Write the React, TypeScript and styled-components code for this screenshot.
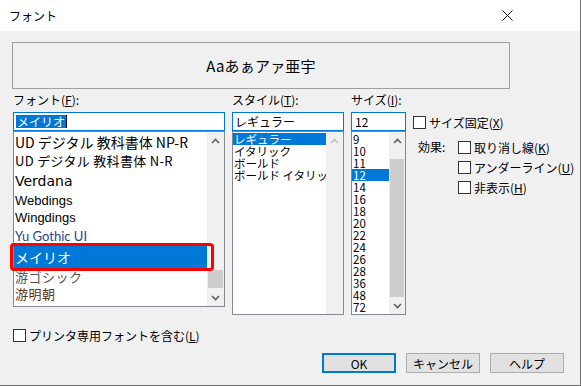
import React from "react";
import styled, { createGlobalStyle } from "styled-components";

const GlobalStyle = createGlobalStyle`
  html, body {
    margin: 0;
    padding: 0;
    background: #f0f0f0;
  }
  body {
    font-family: "Noto Sans CJK JP", "Noto Sans", sans-serif;
    font-size: 12px;
    color: #000;
  }
  * {
    box-sizing: border-box;
  }
`;

const Window = styled.div`
  width: 581px;
  height: 386px;
  background: #f0f0f0;
  border-right: 1px solid #6e6e6e;
  border-bottom: 1px solid #6e6e6e;
  display: flex;
  flex-direction: column;
  overflow: hidden;
`;

const TitleBar = styled.div`
  height: 31px;
  flex: none;
  background: #fff;
  display: flex;
  align-items: center;
  justify-content: space-between;
  padding-left: 9px;
  padding-right: 67px;
  font-size: 12px;
  line-height: 14px;
`;

const Body = styled.div`
  flex: 1;
  padding: 11px 0 0 12px;
  display: flex;
  flex-direction: column;
`;

const Preview = styled.div`
  width: 498px;
  height: 47px;
  border: 1px solid #a0a0a0;
  display: flex;
  align-items: center;
  justify-content: center;
  font-size: 15px;
  letter-spacing: 0.2px;
`;

const Columns = styled.div`
  display: grid;
  grid-template-columns: 212px 112px 55px 1fr;
  column-gap: 7px;
  margin-top: 2px;
  padding-left: 1px;
  align-items: start;
`;

const Column = styled.div`
  display: flex;
  flex-direction: column;
`;

const Label = styled.div`
  height: 18px;
  line-height: 18px;
  margin-bottom: 3px;
  white-space: nowrap;
`;

const Input = styled.div<{ $pad?: number }>`
  height: 19px;
  border: 1px solid #0078d7;
  background: #fff;
  padding-left: ${(p) => p.$pad || 2}px;
  line-height: 17px;
  display: flex;
  align-items: center;
  white-space: nowrap;
`;

const SelText = styled.span`
  background: #0078d7;
  color: #fff;
  line-height: 13px;
  padding: 0 1px;
`;

const Caret = styled.span`
  display: inline-block;
  width: 1px;
  height: 13px;
  background: #000;
`;

const List = styled.div<{ $height: number }>`
  height: ${(p) => p.$height}px;
  border: 1px solid #828790;
  background: #fff;
  display: flex;
`;

const ListBody = styled.div<{ $clip?: boolean }>`
  flex: 1;
  min-width: 0;
  padding-top: 1px;
  overflow: ${(p) => (p.$clip ? "hidden" : "visible")};
`;

const FontItem = styled.div<{
  $h: number;
  $size: number;
  $family?: string;
  $color?: string;
  $selected?: boolean;
  $spacing?: number;
}>`
  position: relative;
  height: ${(p) => p.$h}px;
  line-height: ${(p) => p.$h}px;
  padding-left: 1px;
  font-size: ${(p) => p.$size}px;
  font-family: ${(p) => p.$family || `"Noto Sans CJK JP", sans-serif`};
  letter-spacing: ${(p) => p.$spacing || 0}px;
  color: ${(p) => (p.$selected ? "#fff" : p.$color || "#000")};
  background: ${(p) => (p.$selected ? "#0078d7" : "transparent")};
  white-space: nowrap;
`;

const Annotation = styled.div`
  position: absolute;
  top: -3px;
  bottom: -3px;
  left: -4px;
  right: -7px;
  border: 3px solid #f00;
  border-radius: 4px;
  z-index: 2;
  pointer-events: none;
`;

const Row = styled.div<{ $selected?: boolean }>`
  height: 12px;
  line-height: 12px;
  font-size: 11.5px;
  padding-left: 1px;
  white-space: nowrap;
  color: ${(p) => (p.$selected ? "#fff" : "#000")};
  background: ${(p) => (p.$selected ? "#0078d7" : "transparent")};
`;

const ScrollBar = styled.div<{ $width: number }>`
  width: ${(p) => p.$width}px;
  flex: none;
  background: #f0f0f0;
  display: flex;
  flex-direction: column;
`;

const Arrow = styled.div`
  height: 17px;
  flex: none;
  display: flex;
  align-items: center;
  justify-content: center;
`;

const Track = styled.div`
  flex: 1;
  display: flex;
  flex-direction: column;
`;

const Thumb = styled.div<{ $height?: number }>`
  flex: ${(p) => (p.$height ? "none" : "1")};
  height: ${(p) => (p.$height ? `${p.$height}px` : "auto")};
  background: #cdcdcd;
  margin: 0 1px;
`;

const Gap = styled.div<{ $height?: number }>`
  flex: ${(p) => (p.$height ? "none" : "1")};
  height: ${(p) => (p.$height ? `${p.$height}px` : "auto")};
`;

const Options = styled.div`
  display: flex;
  flex-direction: column;
  padding-top: 22px;
`;

const CheckRow = styled.label<{ $height?: number }>`
  display: flex;
  align-items: center;
  gap: 3px;
  height: ${(p) => p.$height || 20}px;
  white-space: nowrap;
`;

const Box = styled.span`
  width: 13px;
  height: 13px;
  flex: none;
  border: 1px solid #333;
  background: #fff;
`;

const Effects = styled.div`
  display: grid;
  grid-template-columns: 40px auto;
  margin-top: 6px;
  margin-left: 5px;
`;

const EffectsLabel = styled.div`
  height: 20px;
  line-height: 20px;
`;

const EffectsList = styled.div`
  display: flex;
  flex-direction: column;
`;

const Footer = styled.div`
  display: flex;
  flex-direction: column;
  padding-left: 1px;
  margin-top: 11px;
`;

const Buttons = styled.div`
  display: flex;
  justify-content: flex-end;
  gap: 10px;
  margin-top: 9px;
  padding-right: 16px;
`;

const Button = styled.div<{ $primary?: boolean }>`
  width: 74px;
  height: 20px;
  background: #e1e1e1;
  border: ${(p) => (p.$primary ? "2px solid #0078d7" : "1px solid #adadad")};
  display: flex;
  align-items: center;
  justify-content: center;
  font-size: 12px;
`;

const Chevron = ({ up, disabled }: { up?: boolean; disabled?: boolean }) => (
  <svg width="9" height="6" viewBox="0 0 9 6">
    <polyline
      points={up ? "1,5 4.5,1.5 8,5" : "1,1 4.5,4.5 8,1"}
      fill="none"
      stroke={disabled ? "#bfbfbf" : "#606060"}
      strokeWidth="1.6"
    />
  </svg>
);

const CloseIcon = () => (
  <svg width="11" height="11" viewBox="0 0 11 11">
    <path d="M0.5 0.5 L10.5 10.5 M10.5 0.5 L0.5 10.5" stroke="#111" strokeWidth="1" />
  </svg>
);

const fontItems = [
  { name: "UD デジタル 教科書体 NP-R", h: 19, size: 14 },
  { name: "UD デジタル 教科書体 N-R", h: 18, size: 13, spacing: 0.3 },
  { name: "Verdana", h: 22, size: 14, family: `"DejaVu Sans", sans-serif` },
  { name: "Webdings", h: 17, size: 13, family: `"Liberation Sans", sans-serif` },
  { name: "Wingdings", h: 18, size: 13, family: `"Liberation Sans", sans-serif` },
  { name: "Yu Gothic UI", h: 19, size: 13, family: `"Lato", sans-serif`, color: "#1d3f8f" },
  { name: "メイリオ", h: 22, size: 14, selected: true },
  { name: "游ゴシック", h: 17, size: 13, spacing: 0.5, color: "#5a4e48" },
  { name: "游明朝", h: 18, size: 13, spacing: 0.5, color: "#5c3418" },
];

const styles = ["レギュラー", "イタリック", "ボールド", "ボールド イタリック"];
const sizes = ["9", "10", "11", "12", "14", "16", "18", "20", "22", "24", "26", "28", "36", "48", "72"];

export default function App() {
  return (
    <>
      <GlobalStyle />
      <Window>
        <TitleBar>
          <span>フォント</span>
          <CloseIcon />
        </TitleBar>
        <Body>
          <Preview>Aaあぁアァ亜宇</Preview>
          <Columns>
            <Column>
              <Label>
                フォント(<u>F</u>):
              </Label>
              <Input>
                <SelText>メイリオ</SelText>
                <Caret />
              </Input>
              <List $height={176}>
                <ListBody>
                  {fontItems.map((f) => (
                    <FontItem
                      key={f.name}
                      $h={f.h}
                      $size={f.size}
                      $family={f.family}
                      $color={f.color}
                      $spacing={f.spacing}
                      $selected={f.selected}
                    >
                      {f.name}
                      {f.selected && <Annotation />}
                    </FontItem>
                  ))}
                </ListBody>
                <ScrollBar $width={17}>
                  <Arrow>
                    <Chevron up />
                  </Arrow>
                  <Track>
                    <Gap />
                    <Thumb $height={18} />
                    <Gap $height={1} />
                  </Track>
                  <Arrow>
                    <Chevron />
                  </Arrow>
                </ScrollBar>
              </List>
            </Column>

            <Column>
              <Label>
                スタイル(<u>T</u>):
              </Label>
              <Input>レギュラー</Input>
              <List $height={184}>
                <ListBody $clip>
                  {styles.map((s, i) => (
                    <Row key={s} $selected={i === 0}>
                      {s}
                    </Row>
                  ))}
                </ListBody>
                <ScrollBar $width={17}>
                  <Arrow>
                    <Chevron up disabled />
                  </Arrow>
                  <Track />
                </ScrollBar>
              </List>
            </Column>

            <Column>
              <Label>
                サイズ(<u>I</u>):
              </Label>
              <Input $pad={3}>12</Input>
              <List $height={184}>
                <ListBody $clip>
                  {sizes.map((s) => (
                    <Row key={s} $selected={s === "12"}>
                      {s}
                    </Row>
                  ))}
                </ListBody>
                <ScrollBar $width={16}>
                  <Arrow>
                    <Chevron up />
                  </Arrow>
                  <Track>
                    <Gap $height={10} />
                    <Thumb />
                  </Track>
                  <Arrow>
                    <Chevron />
                  </Arrow>
                </ScrollBar>
              </List>
            </Column>

            <Options>
              <CheckRow $height={18}>
                <Box />
                <span>
                  サイズ固定(<u>X</u>)
                </span>
              </CheckRow>
              <Effects>
                <EffectsLabel>効果:</EffectsLabel>
                <EffectsList>
                  <CheckRow>
                    <Box />
                    <span>
                      取り消し線(<u>K</u>)
                    </span>
                  </CheckRow>
                  <CheckRow>
                    <Box />
                    <span>
                      アンダーライン(<u>U</u>)
                    </span>
                  </CheckRow>
                  <CheckRow>
                    <Box />
                    <span>
                      非表示(<u>H</u>)
                    </span>
                  </CheckRow>
                </EffectsList>
              </Effects>
            </Options>
          </Columns>

          <Footer>
            <CheckRow $height={18}>
              <Box />
              <span>
                プリンタ専用フォントを含む(<u>L</u>)
              </span>
            </CheckRow>
            <Buttons>
              <Button $primary>OK</Button>
              <Button>キャンセル</Button>
              <Button>ヘルプ</Button>
            </Buttons>
          </Footer>
        </Body>
      </Window>
    </>
  );
}
